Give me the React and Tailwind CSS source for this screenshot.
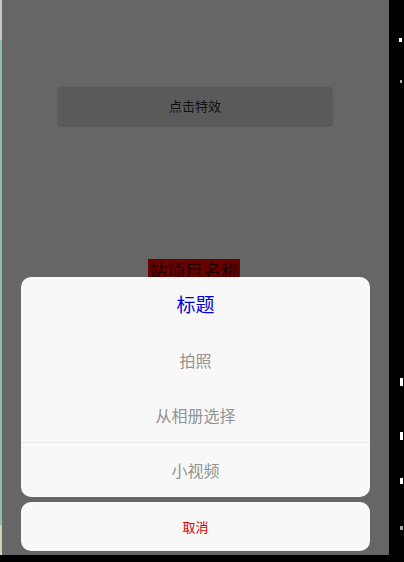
export default function App() {
	const items = ["拍照", "从相册选择", "小视频"];
	const font = { fontFamily: '"Noto Sans CJK SC", "Noto Sans", sans-serif' };

	return (
		<div className="w-[404px] h-[562px] bg-black overflow-hidden flex flex-col" style={font}>
			<div className="h-[555px] flex">
				{/* thin strip of the window behind */}
				<div className="w-[2px] flex flex-col">
					<div className="h-[40px] bg-[#c8c8c8]" />
					<div className="flex-1 bg-[#8fbfae]" />
					<div className="h-[30px] bg-[#d6cfae]" />
				</div>

				<div className="relative w-[387px] bg-[#666666]">
					{/* page content under the dim layer */}
					<div className="pt-[87px] pl-[56px]">
						<div className="w-[274px] h-[38px] bg-[#5a5a5a] shadow-[0_1px_2px_rgba(0,0,0,0.25)] rounded-[2px] flex items-center justify-center text-[13px] text-[#111]">
							点击特效
						</div>
					</div>
					<div className="mt-[134px] flex justify-center pr-[3px]">
						<div className="bg-[#6a0000] h-[22px] px-[1px] text-[18px] leading-[22px] text-[#1a0000]">
							站项目名称
						</div>
					</div>

					{/* action sheet */}
					<div className="absolute left-[19px] right-[19px] bottom-[4px] flex flex-col gap-[5px]">
						<div className="bg-[#f8f8f8] rounded-[10px] overflow-hidden">
							<div className="h-[55px] flex items-center justify-center text-[19px] text-[#0000dd]">
								标题
							</div>
							{items.map((t, i) => (
								<div
									key={t}
									className={`h-[55px] flex items-center justify-center text-[16px] text-[#939393] ${i === 2 ? "border-t border-[#e8e8e8]" : ""}`}
								>
									{t}
								</div>
							))}
						</div>
						<div className="h-[49px] bg-[#f8f8f8] rounded-[10px] flex items-center justify-center text-[13px] text-[#e00000]">
							取消
						</div>
					</div>
				</div>

				<div className="flex-1 relative">
					<div className="absolute left-[10px] top-[38px] w-[3px] h-[4px] bg-white" />
					<div className="absolute left-[11px] top-[80px] w-[2px] h-[3px] bg-[#aaa]" />
					<div className="absolute left-[11px] top-[378px] w-[3px] h-[8px] bg-white" />
					<div className="absolute left-[11px] top-[432px] w-[3px] h-[8px] bg-white" />
					<div className="absolute left-[11px] top-[478px] w-[3px] h-[6px] bg-white" />
					<div className="absolute left-[11px] top-[526px] w-[3px] h-[4px] bg-[#aaa]" />
				</div>
			</div>
		</div>
	);
}
